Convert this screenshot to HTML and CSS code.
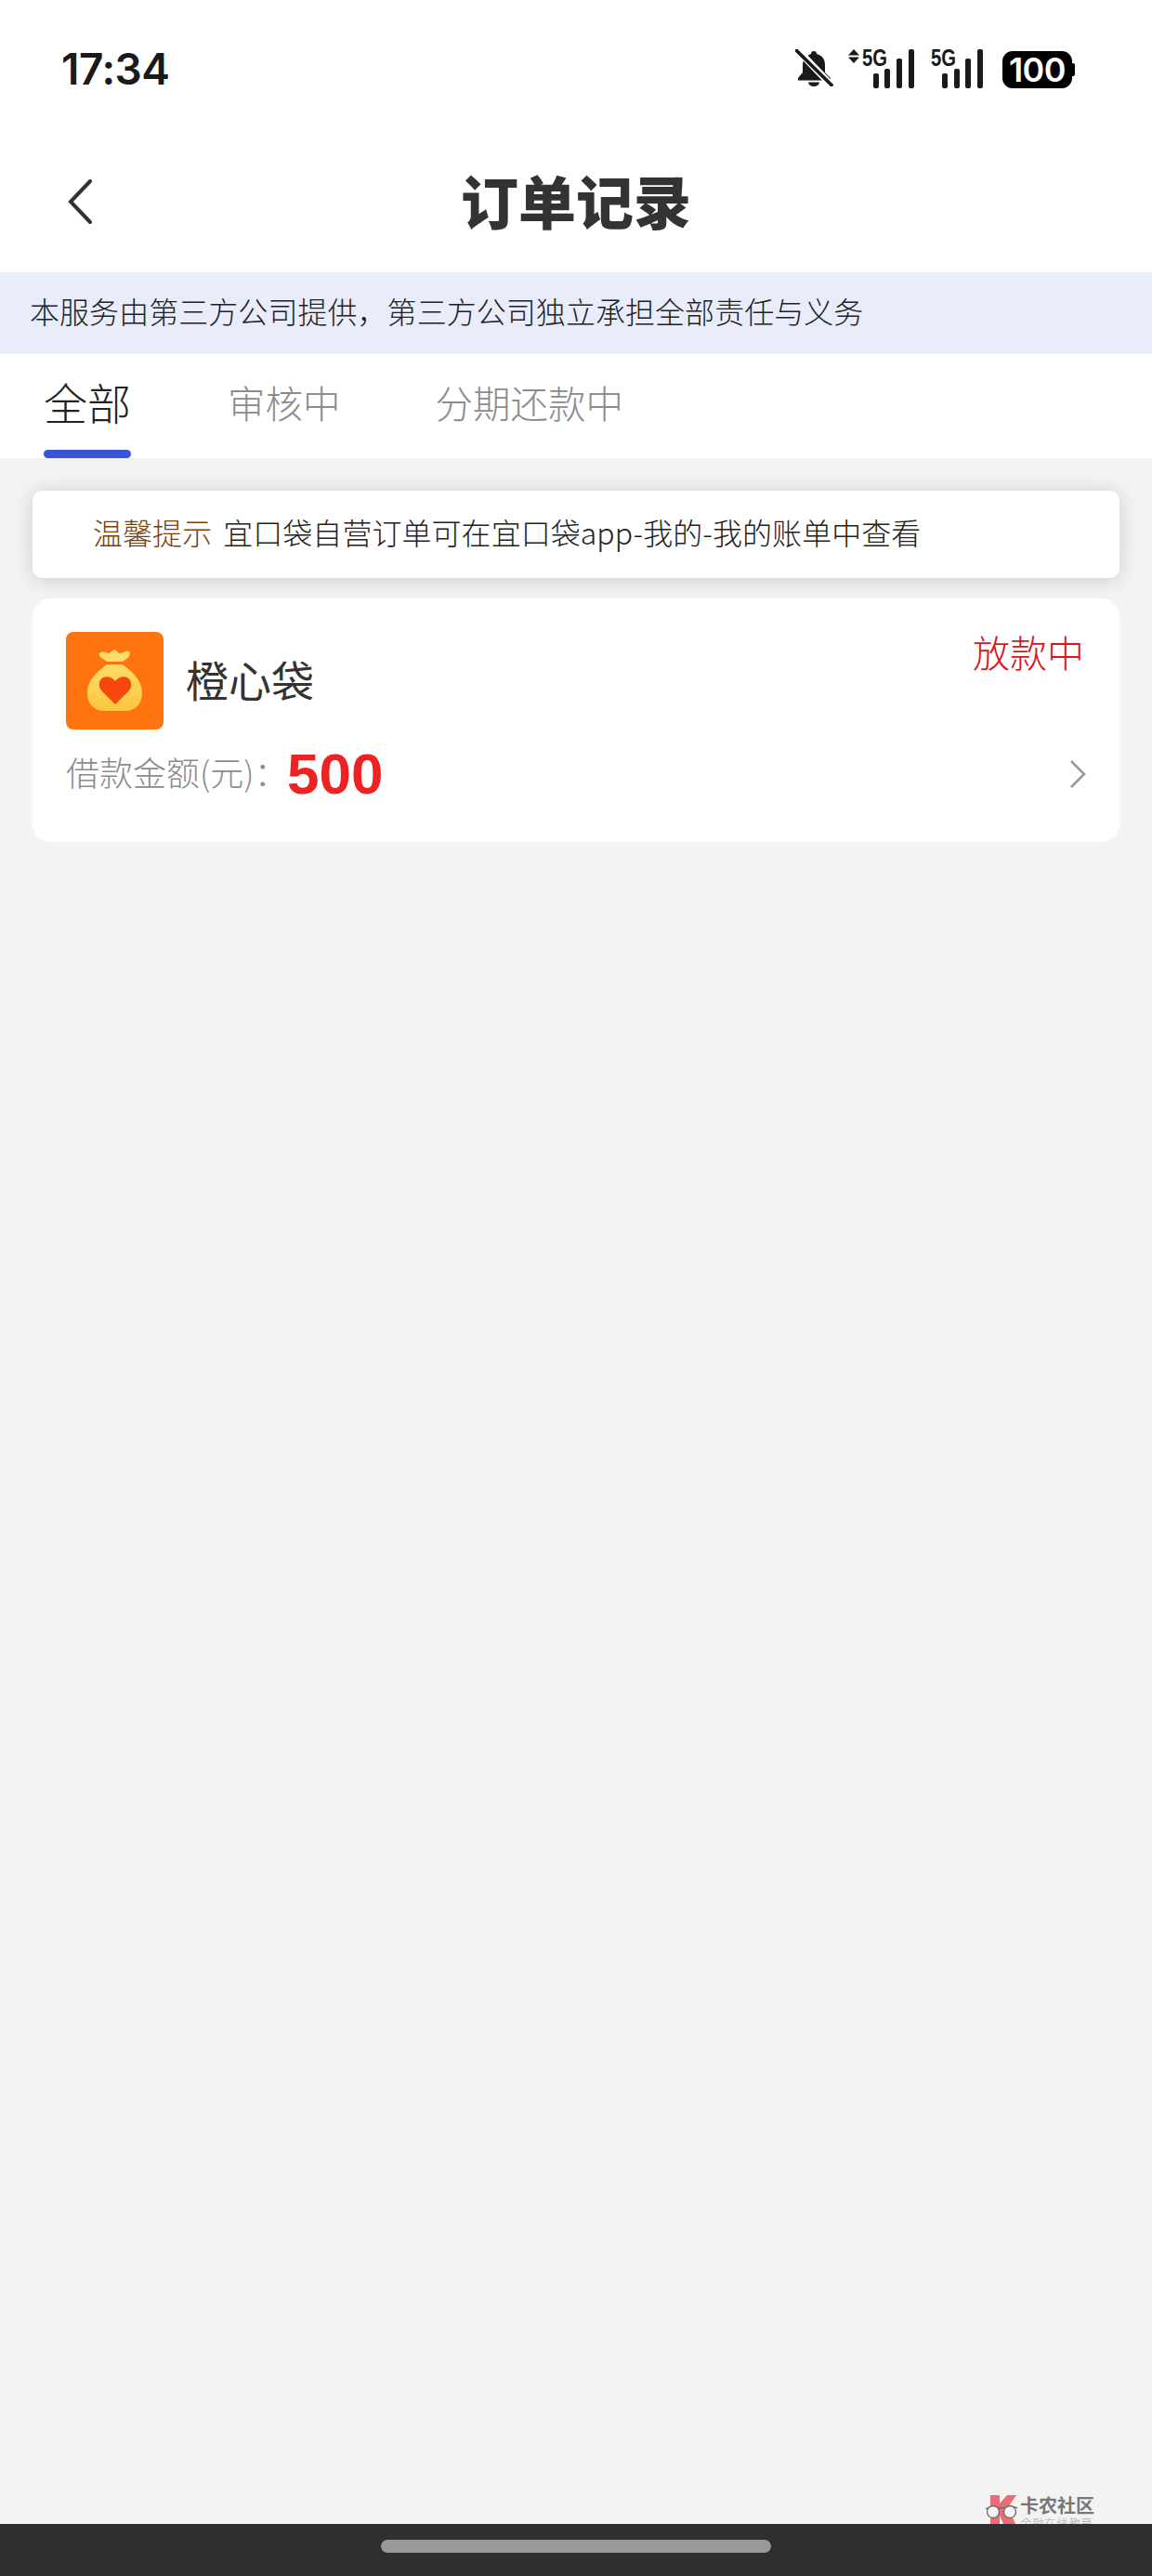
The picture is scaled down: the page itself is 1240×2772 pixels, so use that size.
FILE: index.html
```html
<!DOCTYPE html>
<html lang="zh-CN">
<head>
<meta charset="utf-8">
<title>订单记录</title>
<link rel="stylesheet" href="styles.css">
</head>
<body>
<div class="page">
  <header class="top">
    <div class="status-bar">
      <span class="time">17:34</span>
      <div class="status-icons">
        <svg class="ic-bell" width="41" height="40" viewBox="0 0 41 40">
          <path d="M20 2a3 3 0 0 1 3 3c6 1.500 9 6 9 12v8l6 6v2.500H3V31l5-6v-8c0-6 4-10.500 9-12a3 3 0 0 1 3-3z" fill="#1a1a1a"/>
          <path d="M14 35.500h12a6 4.500 0 0 1-12 0z" fill="#1a1a1a"/>
          <path d="M0 -2L44 44" stroke="#fff" stroke-width="7.500"/>
          <path d="M1.500 1.500L39 38.500" stroke="#1a1a1a" stroke-width="3.800" stroke-linecap="round"/>
        </svg>
        <svg class="ic-sig" width="71" height="48" viewBox="0 -6 71 48">
          <path d="M6 0l6 6.500H0zM6 15l6-6.500H0z" fill="#1a1a1a"/>
          <text class="net" x="15" y="18" textLength="27" lengthAdjust="spacingAndGlyphs">5G</text>
          <rect x="27" y="26" width="6" height="16" rx="2" fill="#1a1a1a"/>
          <rect x="39" y="21" width="6" height="21" rx="2" fill="#1a1a1a"/>
          <rect x="52" y="10" width="6" height="32" rx="2" fill="#1a1a1a"/>
          <rect x="65" y="0" width="6" height="42" rx="2" fill="#1a1a1a"/>
        </svg>
        <svg class="ic-sig ic-sig-b" width="56" height="48" viewBox="0 -6 56 48">
          <text class="net" x="0" y="18" textLength="27" lengthAdjust="spacingAndGlyphs">5G</text>
          <rect x="12" y="26" width="6" height="16" rx="2" fill="#1a1a1a"/>
          <rect x="25" y="21" width="6" height="21" rx="2" fill="#1a1a1a"/>
          <rect x="37" y="10" width="6" height="32" rx="2" fill="#1a1a1a"/>
          <rect x="50" y="0" width="6" height="42" rx="2" fill="#1a1a1a"/>
        </svg>
        <div class="battery"><span class="battery-level">100</span><span class="battery-nub"></span></div>
      </div>
    </div>
    <nav class="nav-bar">
      <svg class="back" width="26" height="48" viewBox="0 0 26 48"><path d="M24 2L3 24l21 22" fill="none" stroke="#333" stroke-width="4" stroke-linecap="round" stroke-linejoin="miter"/></svg>
      <h1 class="title">订单记录</h1>
      <span></span>
    </nav>
  </header>

  <div class="notice">本服务由第三方公司提供，第三方公司独立承担全部责任与义务</div>

  <div class="tabs">
    <div class="tab tab-active"><span class="tab-label">全部</span><span class="tab-line"></span></div>
    <div class="tab"><span class="tab-label">审核中</span></div>
    <div class="tab"><span class="tab-label">分期还款中</span></div>
  </div>

  <main class="content">
    <div class="tip"><span class="tip-tag">温馨提示</span><span class="tip-text">宜口袋自营订单可在宜口袋app-我的-我的账单中查看</span></div>
    <section class="order">
      <div class="order-head">
        <div class="logo">
          <svg width="105" height="105" viewBox="0 0 105 105">
            <defs>
              <linearGradient id="bag" x1="0" y1="0" x2="0" y2="1"><stop offset="0" stop-color="#ffdc66"/><stop offset="1" stop-color="#fdc53f"/></linearGradient>
            </defs>
            <path d="M36 23c3-3 7-1 10 0 2 0 3-3 6-4 3 1 4 4 6 4 3 0 7-4 10-2 2 2 0 6-3 8l-4 3H44l-4-3c-2-1-5-3-4-6z" fill="#ffdc66"/>
            <path d="M44 35h17c9 7 21 16 21 31 0 12-8 19-18 19H41c-10 0-18-7-18-19 0-15 12-24 21-31z" fill="url(#bag)"/>
            <path d="M53 78L39 64c-5-5-4-12 1-15 5-2 10 0 13 4 3-4 8-6 13-4 5 3 6 10 1 15z" fill="#f5480e"/>
          </svg>
        </div>
        <span class="order-name">橙心袋</span>
        <span class="order-status">放款中</span>
      </div>
      <div class="order-foot">
        <span class="amount-label">借款金额(元)：</span>
        <span class="amount">500</span>
        <svg class="chevron" width="18" height="32" viewBox="0 0 18 32"><path d="M2 2l14 14L2 30" fill="none" stroke="#999" stroke-width="2.600"/></svg>
      </div>
    </section>
    <div class="watermark">
      <svg width="38" height="31" viewBox="0 0 38 31">
        <path d="M6 0h10v9L24 0h10l-9 13 8 18H20l-4-9v9H6z" fill="#ee6b74"/>
        <path d="M1 15c4-3 10-3 14-1 3-1 3-1 6 0 5-2 11-2 14 0" fill="none" stroke="#6b6b6b" stroke-width="1.500"/>
        <circle cx="9" cy="18" r="6.500" fill="#f3f3f3" stroke="#6b6b6b" stroke-width="1.300"/>
        <circle cx="27" cy="18" r="6.500" fill="#f3f3f3" stroke="#6b6b6b" stroke-width="1.300"/>
      </svg>
      <div class="wm-text"><span class="wm-name">卡农社区</span><span class="wm-sub">金融在线教育</span></div>
    </div>
  </main>

  <footer class="home-bar"><span class="home-pill"></span></footer>
</div>
</body>
</html>
```
FILE: styles.css
```css
* { box-sizing: border-box; }
html, body { margin: 0; padding: 0; }
body {
  font-family: "Noto Sans CJK SC", "Noto Sans", sans-serif;
  font-weight: 300;
  background: #f3f3f3;
  color: #222;
}
.page { width: 1240px; height: 2772px; display: flex; flex-direction: column; overflow: hidden; }

.top { background: #fff; height: 293px; flex: none; }
.status-bar { height: 148px; padding: 53px 83px 0 66px; display: flex; justify-content: space-between; align-items: flex-start; }
.time { font-family: Inter, sans-serif; font-weight: 600; font-size: 46px; line-height: 42px; color: #1a1a1a; letter-spacing: -0.5px; }
.status-icons { display: flex; align-items: flex-start; }
.ic-bell { margin-right: 16px; }
.ic-sig { margin: -6px 18px 0 0; }
.ic-sig-b { margin-right: 21px; }
.net { font-family: "Liberation Sans", sans-serif; font-weight: 700; font-size: 25px; fill: #1a1a1a; }
.battery { display: flex; align-items: center; margin-top: 2px; }
.battery-level { width: 75px; height: 40px; background: #000; color: #fff; border-radius: 11px; font-family: Inter, sans-serif; font-weight: 600; font-size: 36px; line-height: 40px; text-align: center; letter-spacing: -0.5px; }
.battery-nub { width: 3px; height: 14px; background: #000; border-radius: 0 2px 2px 0; }

.nav-bar { height: 145px; padding: 0 73px 7px; display: grid; grid-template-columns: 1fr auto 1fr; align-items: center; }
.title { margin: -4px 0 0; font-size: 62px; line-height: 70px; font-weight: 900; color: #333; }

.notice { flex: none; height: 88px; padding-left: 32px; background: #e9edfb; font-size: 32px; line-height: 82px; letter-spacing: 0.05px; color: #222; }

.tabs { flex: none; height: 112px; background: #fff; padding-left: 47px; display: flex; gap: 102px; }
.tab { position: relative; display: flex; flex-direction: column; align-items: center; }
.tab-active { margin-right: 2px; }
.tab-label { font-size: 40.500px; line-height: 60px; margin-top: 22px; color: #8c8c8c; }
.tab-active .tab-label { font-size: 47px; margin-top: 21px; color: #222; }
.tab-line { position: absolute; left: 0; right: 0; bottom: 0; height: 9px; border-radius: 5px; background: #3a55d3; }

.content { flex: 1; position: relative; padding: 35px 35px 0; display: flex; flex-direction: column; gap: 22px; }

.tip { height: 94px; padding: 0 0 6px 65px; background: #fff; border-radius: 10px; box-shadow: 0 2px 22px rgba(0, 0, 0, .16); display: flex; align-items: center; gap: 12px; font-size: 32px; line-height: 46px; letter-spacing: 0.05px; }
.tip-tag { color: #7a4208; }
.tip-text { color: #222; }

.order { height: 262px; background: #fff; border-radius: 20px; padding: 36px 36px 0; position: relative; }
.order-head { display: flex; align-items: center; height: 105px; }
.logo { width: 105px; height: 105px; flex: none; border-radius: 8px; background: #ff7411; overflow: hidden; }
.logo svg { display: block; }
.order-name { margin: 0 0 6px 24px; font-size: 46px; line-height: 60px; font-weight: 400; color: #333; }
.order-status { margin-left: auto; align-self: flex-start; margin-right: 2px; font-size: 40px; line-height: 56px; margin-top: -7px; color: #d8161c; }
.order-foot { display: flex; align-items: center; height: 60px; margin-top: 18px; }
.amount-label { font-size: 36px; line-height: 60px; margin-top: -6px; color: #8c8c8c; width: 238px; flex: none; white-space: nowrap; }
.amount { font-family: "Liberation Sans", Arial, sans-serif; font-weight: 700; font-size: 62px; line-height: 60px; color: #ee2222; }
.chevron { margin-left: auto; }

.watermark { position: absolute; left: 1060px; top: 2192px; display: flex; gap: 0; }
.wm-text { display: flex; flex-direction: column; }
.wm-name { font-size: 20px; line-height: 22px; font-weight: 700; color: #777; white-space: nowrap; }
.wm-sub { font-size: 13px; line-height: 16px; color: #aaa; white-space: nowrap; }

.home-bar { flex: none; position: relative; height: 56px; background: #2f2f2f; display: flex; justify-content: center; padding-top: 17px; }
.home-pill { width: 420px; height: 14px; border-radius: 7px; background: #999; }
```
